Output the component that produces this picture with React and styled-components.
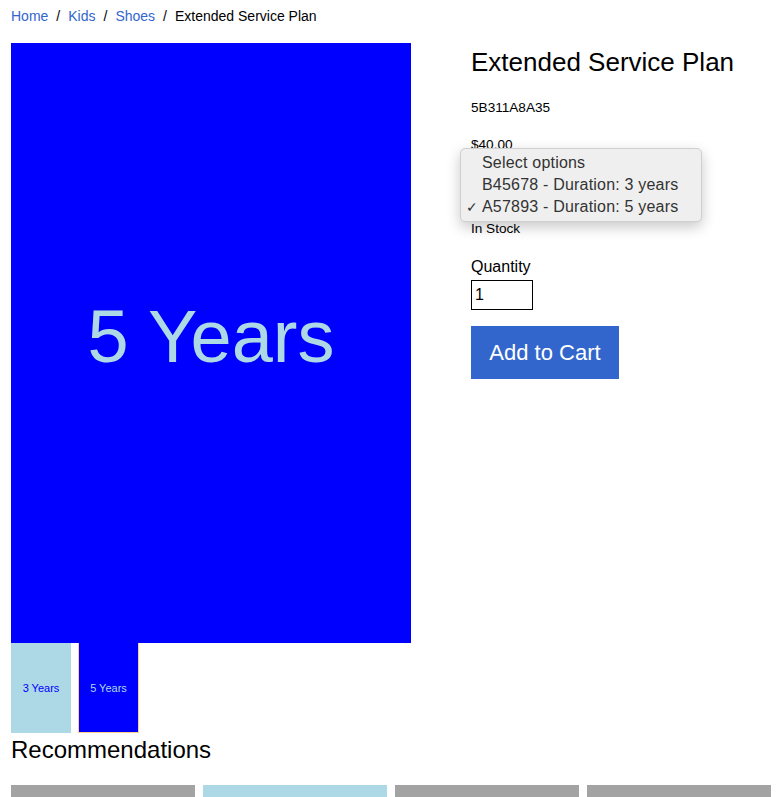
import React from 'react';
import styled, { createGlobalStyle } from 'styled-components';

const GlobalStyle = createGlobalStyle`
  body {
    margin: 0;
    background: #fff;
    color: #000;
    font-family: "Liberation Sans", Arial, Helvetica, sans-serif;
  }
`;

const options = [
    { id: 'none', label: 'Select options' },
    { id: 'B45678', label: 'B45678 - Duration: 3 years' },
    { id: 'A57893', label: 'A57893 - Duration: 5 years' },
];

const thumbs = [
    { label: '3 Years', light: true },
    { label: '5 Years', light: false, active: true },
];

const recs = ['#a3a3a3', '#add8e6', '#a3a3a3', '#a3a3a3'];

export default function App() {
    return <Page>
        <GlobalStyle />
        <Breadcrumb>
            <Crumb href="#">Home</Crumb>
            <Sep>/</Sep>
            <Crumb href="#">Kids</Crumb>
            <Sep>/</Sep>
            <Crumb href="#">Shoes</Crumb>
            <Sep>/</Sep>
            <Current>Extended Service Plan</Current>
        </Breadcrumb>

        <Product>
            <Gallery>
                <MainImage>5 Years</MainImage>
                <ThumbRow>
                    {thumbs.map((t) => (
                        <Thumb key={t.label} $light={t.light} $active={t.active}>{t.label}</Thumb>
                    ))}
                </ThumbRow>
            </Gallery>

            <Details>
                <Title>Extended Service Plan</Title>
                <Sku>5B311A8A35</Sku>
                <Price>$40.00</Price>
                <Select defaultValue="A57893">
                    {options.map((o) => <option key={o.id} value={o.id}>{o.label}</option>)}
                </Select>
                <Stock>In Stock</Stock>
                <QtyLabel htmlFor="qty">Quantity</QtyLabel>
                <QtyInput id="qty" defaultValue="1" />
                <CartButton>Add to Cart</CartButton>

                {/* open native dropdown of the option select */}
                <Menu>
                    {options.map((o) => (
                        <MenuItem key={o.id} $checked={o.id === 'A57893'}>{o.label}</MenuItem>
                    ))}
                </Menu>
            </Details>
        </Product>

        <SectionTitle>Recommendations</SectionTitle>
        <RecGrid>
            {recs.map((c, i) => <RecCard key={i} $bg={c} />)}
        </RecGrid>
    </Page>;
}

const Page = styled.div`
    width: 760px;
    margin-left: 11px;
`;

const Breadcrumb = styled.nav`
    display: flex;
    align-items: center;
    padding-top: 8px;
    font-size: 14px;
    line-height: 16px;
`;

const Crumb = styled.a`
    color: #3366cc;
    text-decoration: none;
`;

const Sep = styled.span`
    margin: 0 8px;
`;

const Current = styled.span``;

const Product = styled.div`
    display: flex;
    gap: 60px;
    margin-top: 19px;
`;

const Gallery = styled.div`
    width: 400px;
    display: flex;
    flex-direction: column;
`;

const MainImage = styled.div`
    height: 600px;
    background: #0000ff;
    color: #add8e6;
    font-size: 74px;
    display: flex;
    align-items: center;
    justify-content: center;
    padding-bottom: 14px;
    box-sizing: border-box;
`;

const ThumbRow = styled.div`
    display: flex;
    gap: 7px;
`;

const Thumb = styled.div`
    width: ${(p) => (p.$active ? '61px' : '60px')};
    height: 90px;
    box-sizing: border-box;
    background: ${(p) => (p.$light ? '#add8e6' : '#0000ff')};
    color: ${(p) => (p.$light ? '#0000ff' : '#add8e6')};
    border: ${(p) => (p.$active ? '1px solid #fcd08a' : 'none')};
    border-top: none;
    font-size: 11px;
    display: flex;
    align-items: center;
    justify-content: center;
`;

const Details = styled.div`
    position: relative;
    display: flex;
    flex-direction: column;
    align-items: flex-start;
    flex: 1;
`;

const Title = styled.h1`
    margin: 4px 0 0;
    font-size: 26px;
    line-height: 30px;
    font-weight: normal;
`;

const Sku = styled.div`
    margin-top: 23px;
    font-size: 13.6px;
    line-height: 16px;
`;

const Price = styled.div`
    margin-top: 21px;
    font-size: 13.6px;
    line-height: 16px;
`;

const Select = styled.select`
    margin-top: 24px;
    height: 20px;
    font-size: 13px;
    font-family: inherit;
`;

const Stock = styled.div`
    margin-top: 24px;
    font-size: 13.6px;
    line-height: 16px;
`;

const QtyLabel = styled.label`
    margin-top: 21px;
    font-size: 16px;
    line-height: 18px;
`;

const QtyInput = styled.input`
    margin-top: 4px;
    width: 62px;
    height: 30px;
    box-sizing: border-box;
    border: 1px solid #000;
    padding: 0 3px;
    font-size: 16px;
    font-family: inherit;
    outline: none;
`;

const CartButton = styled.button`
    margin-top: 16px;
    width: 148px;
    height: 53px;
    border: none;
    background: #3366cc;
    color: #fff;
    font-size: 22px;
    font-family: inherit;
    padding: 0;
`;

const Menu = styled.div`
    position: absolute;
    top: 105px;
    left: -11px;
    width: 242px;
    height: 74px;
    box-sizing: border-box;
    padding: 3px 0 5px;
    background: #efefef;
    border: 1px solid #cfcfcf;
    border-radius: 5px;
    box-shadow: 0 5px 14px rgba(0, 0, 0, 0.22);
`;

const MenuItem = styled.div`
    position: relative;
    height: 22px;
    line-height: 22px;
    padding-left: 21px;
    font-size: 16px;
    letter-spacing: 0.2px;
    color: #333;
    white-space: nowrap;

    &::before {
        content: ${(p) => (p.$checked ? '"✓"' : '""')};
        position: absolute;
        left: 5px;
        font-size: 14px;
    }
`;

const SectionTitle = styled.h2`
    margin: 3px 0 0;
    font-size: 24px;
    line-height: 28px;
    font-weight: normal;
`;

const RecGrid = styled.div`
    display: grid;
    grid-template-columns: repeat(4, 1fr);
    gap: 8px;
    margin-top: 21px;
`;

const RecCard = styled.div`
    height: 200px;
    background: ${(p) => p.$bg};
`;
